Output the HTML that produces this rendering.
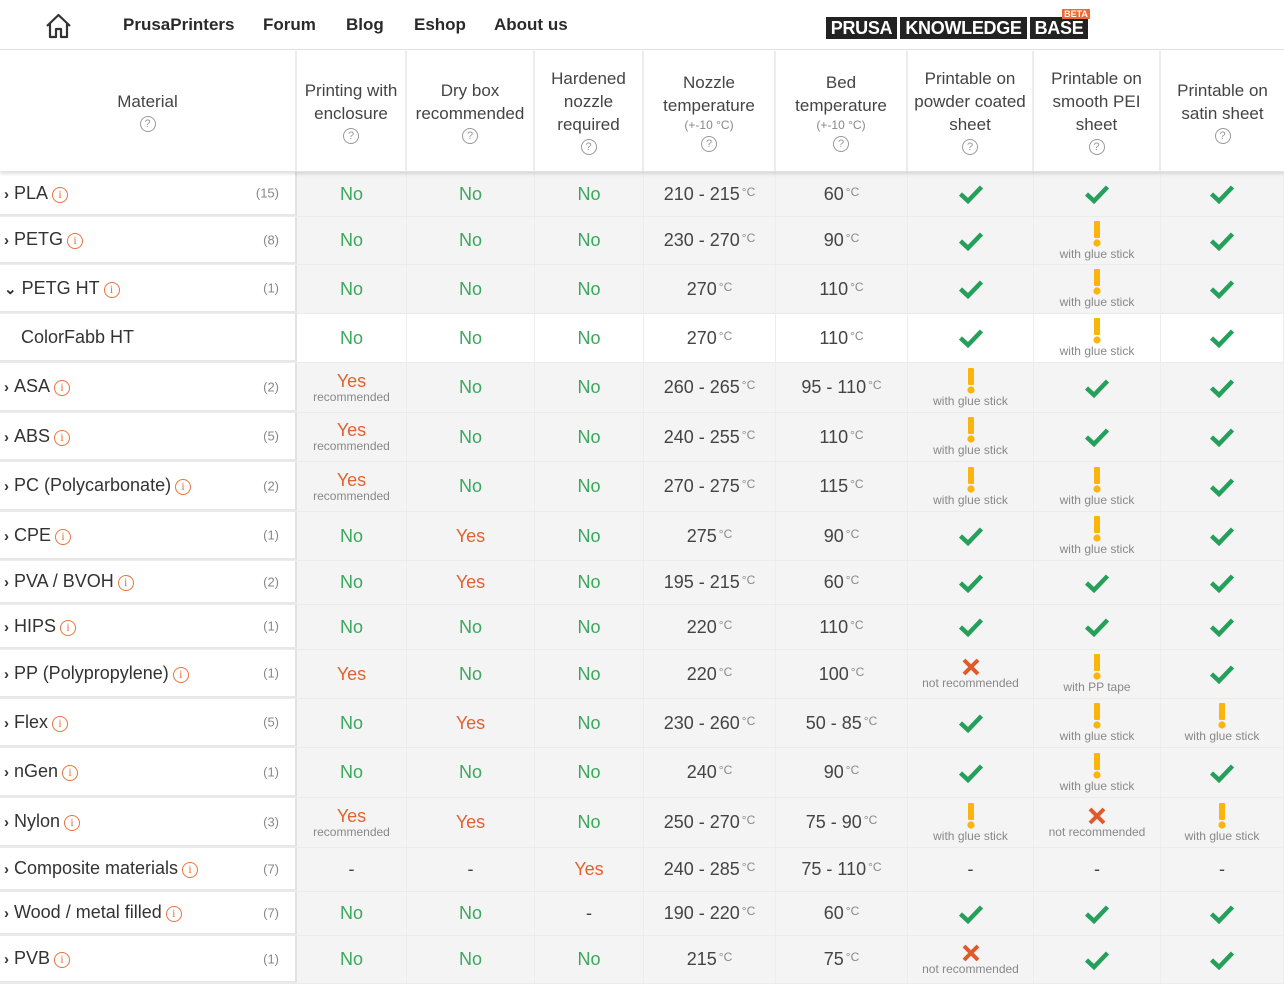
<!DOCTYPE html>
<html><head><meta charset="utf-8"><style>
*{box-sizing:border-box;margin:0;padding:0}
body{width:1284px;height:982px;overflow:hidden;background:#fff;font-family:"Liberation Sans",sans-serif;color:#333;position:relative}
.nav{position:absolute;left:0;top:0;width:1284px;height:50px;border-bottom:1px solid #e2e2e2}
.nav a{position:absolute;top:15px;font-size:17px;font-weight:bold;color:#2a2a2a;text-decoration:none}
.logo{position:absolute;top:17px;height:22px;background:#222;color:#fff;font-weight:bold;font-size:18px;line-height:22px;text-align:center;overflow:hidden;letter-spacing:-0.3px}
.beta{position:absolute;left:1062px;top:9px;width:28px;height:10px;background:#ee6a30;color:#fff;font-size:9px;font-weight:bold;line-height:10px;text-align:center}
.hdr{position:absolute;top:51px;left:0;width:1284px;height:120px;display:flex;box-shadow:0 3px 3px rgba(0,0,0,.12);background:#fff;z-index:2}
.hdr div{border-right:2px solid #ececec;display:flex;flex-direction:column;align-items:center;justify-content:center;text-align:center;font-size:17px;color:#444;line-height:23px}
.hdr small{font-size:12px;color:#888;line-height:16px}
.q{display:inline-block;width:16px;height:16px;border:1px solid #999;border-radius:50%;font-size:11px;line-height:14px;color:#999;text-align:center;margin-top:3px}
.rows{position:absolute;top:172px;left:0;width:1284px}
.r{display:flex;border-bottom:1px solid #ebebeb;background:#f4f4f4}
.r>div{display:flex;flex-direction:column;align-items:center;justify-content:center;text-align:center;font-size:18px;color:#444;border-right:1px solid #ededed}
.r>div.m{align-items:flex-start;justify-content:center;background:#fff;border-right:2px solid #e2e2e2;border-bottom:2px solid #e8e8e8;padding-left:4px;position:relative;font-size:18px;color:#333}
.m .c{position:absolute;right:16px;top:50%;transform:translateY(-50%);font-size:13px;color:#888}
.i{display:inline-block;width:16px;height:16px;border:1.5px solid #e9733d;border-radius:50%;color:#e9733d;font-size:12px;line-height:13px;text-align:center;vertical-align:1px;margin-left:4px;font-family:"Liberation Serif",serif}
.ar{font-weight:bold;font-size:15px;margin-right:5px;color:#333}
.g{color:#3aa85c}.y{color:#e2622f}
.s{font-size:12px;color:#888;line-height:14px}
sup{font-size:12px;color:#888;vertical-align:4px;margin-left:2px}
.t{line-height:18px}
</style></head><body>
<div class="nav">
<svg style="position:absolute;left:45px;top:13px" width="27" height="26" viewBox="0 0 27 26"><path d="M2 13 L13.5 2 L25 13 M5 10 V24 H11 V16 H16 V24 H22 V10" fill="none" stroke="#333" stroke-width="2.2" stroke-linejoin="round"/></svg>
<a style="left:123px">PrusaPrinters</a><a style="left:263px">Forum</a><a style="left:346px">Blog</a><a style="left:414px">Eshop</a><a style="left:494px">About us</a>
<div class="logo" style="left:826px;width:71px">PRUSA</div><div class="logo" style="left:900px;width:127px">KNOWLEDGE</div><div class="logo" style="left:1030px;width:58px">BASE</div><div class="beta">BETA</div>
</div>
<div class="hdr">
<div style="width:297px">Material<span class="q">?</span></div>
<div style="width:110px">Printing with<br>enclosure<span class="q">?</span></div>
<div style="width:128px">Dry box<br>recommended<span class="q">?</span></div>
<div style="width:109px">Hardened<br>nozzle<br>required<span class="q">?</span></div>
<div style="width:132px">Nozzle<br>temperature<small>(+-10 °C)</small><span class="q">?</span></div>
<div style="width:132px">Bed<br>temperature<small>(+-10 °C)</small><span class="q">?</span></div>
<div style="width:126px">Printable on<br>powder coated<br>sheet<span class="q">?</span></div>
<div style="width:127px">Printable on<br>smooth PEI<br>sheet<span class="q">?</span></div>
<div style="width:123px;border-right:none">Printable on<br>satin sheet<span class="q">?</span></div>
</div>
<div class="rows" id="rows"></div>
<script>
const W=[297,110,128,109,132,132,126,127,123];
const C='<svg width="26" height="20" viewBox="0 0 26 20"><path d="M2.5 10 L10 17 L23.5 3" stroke="#24a05a" stroke-width="4.5" fill="none"/></svg>';
const E='<svg width="8" height="26" viewBox="0 0 8 26"><rect x="1" y="0" width="6" height="17" rx="1" fill="#fbb40a"/><circle cx="4" cy="22" r="3.6" fill="#fbb40a"/></svg>';
const X='<svg width="18" height="18" viewBox="0 0 18 18"><path d="M2 2L16 16M16 2L2 16" stroke="#e05a2b" stroke-width="4"/></svg>';
const G=E+'<span class="s">with glue stick</span>',NR=X+'<span class="s">not recommended</span>';
const no='<span class="g">No</span>',ye='<span class="y">Yes</span>',yr='<span class="y t">Yes</span><span class="s">recommended</span>';
const T=(a)=>'<span>'+a+'<sup>°C</sup></span>';
const R=[
[45,'PLA',15,no,no,no,'210 - 215','60',C,C,C],
[48,'PETG',8,no,no,no,'230 - 270','90',C,G,C],
[49,'PETG HT',1,no,no,no,'270','110',C,G,C,'v'],
[49,'ColorFabb HT',0,no,no,no,'270','110',C,G,C,'sub'],
[50,'ASA',2,yr,no,no,'260 - 265','95 - 110',G,C,C],
[49,'ABS',5,yr,no,no,'240 - 255','110',G,C,C],
[50,'PC (Polycarbonate)',2,yr,no,no,'270 - 275','115',G,G,C],
[49,'CPE',1,no,ye,no,'275','90',C,G,C],
[44,'PVA / BVOH',2,no,ye,no,'195 - 215','60',C,C,C],
[45,'HIPS',1,no,no,no,'220','110',C,C,C],
[49,'PP (Polypropylene)',1,ye,no,no,'220','100',NR,E+'<span class="s">with PP tape</span>',C],
[49,'Flex',5,no,ye,no,'230 - 260','50 - 85',C,G,G],
[50,'nGen',1,no,no,no,'240','90',C,G,C],
[50,'Nylon',3,yr,ye,no,'250 - 270','75 - 90',G,NR,G],
[44,'Composite materials',7,'-','-',ye,'240 - 285','75 - 110','-','-','-'],
[44,'Wood / metal filled',7,no,no,'-','190 - 220','60',C,C,C],
[48,'PVB',1,no,no,no,'215','75',NR,C,C]];
let h='';
for(const r of R){
 const sub=r[11]==='sub';
 let m=sub?'<span style="padding-left:17px">ColorFabb HT</span>':'<span><span class="ar">'+(r[11]==='v'?'&#8964;':'&#8250;')+'</span>'+r[1]+'<span class="i">i</span></span><span class="c">('+r[2]+')</span>';
 h+='<div class="r" style="height:'+r[0]+'px'+(sub?';background:#fff':'')+'"><div class="m" style="width:297px">'+m+'</div>';
 for(let k=1;k<9;k++){let v=r[k+2];if(k==4||k==5)v=T(v);h+='<div style="width:'+W[k]+'px">'+v+'</div>';}
 h+='</div>';
}
document.getElementById('rows').innerHTML=h;
</script>
</body></html>
